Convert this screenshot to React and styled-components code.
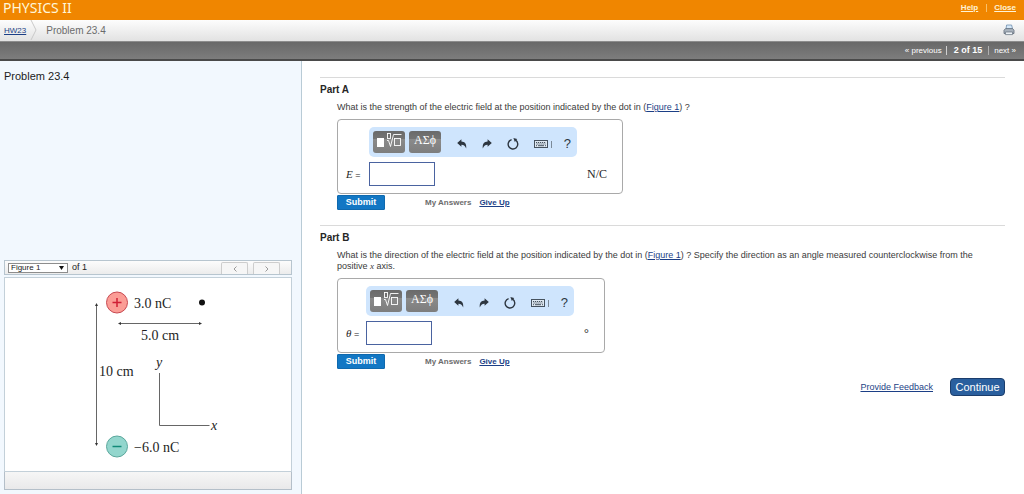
import React from "react";
import styled, { createGlobalStyle } from "styled-components";

const GlobalStyle = createGlobalStyle`
  * {
    box-sizing: border-box;
  }

  body {
    margin: 0;
    background: #ffffff;
    color: #3a3a3a;
    font-family: "Liberation Sans", Arial, sans-serif;
    font-size: 9px;
    line-height: 11px;
  }

  button,
  input,
  select {
    font-family: inherit;
    margin: 0;
  }
`;

const Page = styled.div`
  min-height: 100vh;
  display: flex;
  flex-direction: column;
`;

const TopBar = styled.header`
  height: 20px;
  padding: 0 8px 5px 3px;
  display: flex;
  align-items: center;
  justify-content: space-between;
  background: #f08600;
`;

const CourseTitle = styled.h1`
  margin: 0;
  color: #fff6d8;
  font-family: "Noto Sans", Verdana, sans-serif;
  font-size: 14px;
  font-weight: 400;
  line-height: 14px;
`;

const TopLinks = styled.nav`
  display: flex;
  align-items: center;
  font-size: 8px;
  font-weight: 700;
  line-height: 8px;
`;

const TopLink = styled.a`
  color: #fff4d6;

  & + & {
    margin-left: 8px;
    padding-left: 7px;
    border-left: 1px solid #f9c069;
  }
`;

const Breadcrumbs = styled.nav`
  height: 22px;
  padding: 0 9px 1px 4px;
  display: flex;
  align-items: center;
  background: linear-gradient(#fdfdfd, #e2e2e2);
  border-bottom: 1px solid #8c8c8c;
`;

const CrumbLink = styled.a`
  color: #1c3f86;
  font-size: 8px;
`;

const CrumbArrow = styled.svg`
  width: 8px;
  height: 20px;
  margin: 0 8px 0 4px;
`;

const CrumbCurrent = styled.span`
  flex: 1;
  color: #6b6b6b;
  font-size: 10px;
`;

const PrintButton = styled.button`
  padding: 0;
  border: 0;
  background: none;
  line-height: 0;
  cursor: pointer;
`;

const Pager = styled.nav`
  height: 19px;
  padding: 0 8px;
  display: flex;
  align-items: center;
  justify-content: flex-end;
  background: linear-gradient(#686868, #7d7d7d);
  border-bottom: 2px solid #4a4a4a;
  color: #ffffff;
`;

const PagerLink = styled.a`
  color: #ffffff;
  font-size: 8px;
  text-decoration: none;
`;

const PagerCount = styled.span`
  height: 9px;
  margin: 0 5px 0 4px;
  padding: 0 6px 0 7px;
  border-left: 1px solid #d0d0d0;
  border-right: 1px solid #b0b0b0;
  line-height: 9px;
  font-weight: 700;
`;

const Content = styled.div`
  flex: 1;
  display: flex;
`;

const Sidebar = styled.aside`
  width: 302px;
  flex-shrink: 0;
  padding: 8px 9px 4px 4px;
  display: flex;
  flex-direction: column;
  justify-content: space-between;
  background: #f2f8fe;
  border-right: 1px solid #b9cbd6;
`;

const ProblemTitle = styled.h2`
  margin: 0;
  color: #1c1c1c;
  font-size: 11px;
  font-weight: 400;
  line-height: 14px;
`;

const FigurePanel = styled.section`
  display: flex;
  flex-direction: column;
`;

const FigureBar = styled.div`
  height: 15px;
  margin-bottom: 2px;
  padding: 0 11px 0 3px;
  display: flex;
  align-items: center;
  gap: 4px;
  background: linear-gradient(#fcfcfc, #ececec);
  border: 1px solid #b7c5cf;
`;

const SelectWrap = styled.div`
  position: relative;
  display: flex;
`;

const FigureSelect = styled.select`
  width: 60px;
  height: 10px;
  padding: 0 2px;
  appearance: none;
  background: #ffffff;
  border: 1px solid #8d8d8d;
  border-radius: 0;
  color: #222222;
  font-size: 8px;
  line-height: 8px;
`;

const SelectArrow = styled.svg`
  position: absolute;
  top: 3px;
  right: 4px;
  width: 5px;
  height: 4px;
  pointer-events: none;
`;

const FigureCount = styled.span`
  flex: 1;
  color: #222222;
`;

const StepButton = styled.button`
  width: 27px;
  height: 12px;
  align-self: flex-end;
  padding: 0;
  display: flex;
  align-items: center;
  justify-content: center;
  background: #f6f6f6;
  border: 1px solid #cdcdcd;
  border-bottom: 0;
  border-radius: 2px 2px 0 0;

  & + & {
    margin-left: 1px;
  }
`;

const FigureBox = styled.div`
  background: #ffffff;
  border: 1px solid #c3d0d9;
  line-height: 0;

  svg {
    width: 100%;
    height: auto;
  }
`;

const FigureFooter = styled.div`
  height: 18px;
  background: linear-gradient(#f6f6f6, #e9e9ea);
  border: 1px solid #b4bfc9;
  border-top: 0;
`;

const Main = styled.main`
  flex: 1;
  padding: 16px 19px 16px 18px;
`;

const PartSection = styled.section`
  padding-top: 5px;
  border-top: 1px solid #dadada;

  & + & {
    margin-top: 15px;
  }
`;

const PartTitle = styled.h3`
  margin: 0 0 5px;
  color: #262626;
  font-size: 10px;
  line-height: 14px;
`;

const PartBody = styled.div`
  padding-left: 17px;
`;

const Question = styled.p`
  margin: 0 16px 6px 0;
`;

const Link = styled.a`
  color: #1c3f86;
`;

const MathSymbol = styled.i`
  font-family: "Liberation Serif", "Times New Roman", serif;
`;

const AnswerBox = styled.div`
  width: fit-content;
  padding: 7px 15px 7px 8px;
  display: grid;
  grid-template-columns: ${({ $labelWidth }) => $labelWidth}px auto auto;
  column-gap: 10px;
  row-gap: 5px;
  align-items: center;
  border: 1px solid #a9a9a9;
  border-radius: 4px;
`;

const Toolbar = styled.div`
  grid-column: 2;
  width: 208px;
  height: 30px;
  padding: 0 6px 0 4px;
  display: flex;
  align-items: center;
  justify-content: space-between;
  background: #cfe5fd;
  border-radius: 5px;
`;

const PaletteGroup = styled.div`
  display: flex;
  gap: 4px;
`;

const PaletteButton = styled.button`
  width: 32px;
  height: 22px;
  padding: 0 0 4px;
  display: flex;
  align-items: center;
  justify-content: center;
  background: linear-gradient(#6a6a6a 0, #747474 35%, #8b8b8b 36%, #7d7d7d);
  border: 0;
  border-radius: 3px;
  color: #ffffff;
  font-family: "Liberation Serif", "Times New Roman", serif;
  font-size: 12px;
  line-height: 12px;
`;

const ToolGroup = styled.div`
  padding-top: 4px;
  display: flex;
  align-items: center;
  gap: 15px;
`;

const HelpTools = styled.div`
  display: flex;
  align-items: center;
  gap: 11px;
`;

const ToolButton = styled.button`
  padding: 0;
  display: flex;
  background: none;
  border: 0;
  color: #2d3640;
  font-size: 13px;
  line-height: 14px;
`;

const AnswerLabel = styled.label`
  grid-column: 1;
  color: #262626;
  font-size: 9px;
  line-height: 14px;
  white-space: nowrap;

  i {
    font-family: "Liberation Serif", "Times New Roman", serif;
    font-size: 11px;
  }
`;

const AnswerInput = styled.input`
  width: 66px;
  height: 24px;
  padding: 0 4px;
  background: #ffffff;
  border: 1px solid #4a63a0;
  font-size: 11px;
`;

const Unit = styled.span`
  color: #262626;
  font-family: "Liberation Serif", "Times New Roman", serif;
  font-size: 12px;
  line-height: 14px;
`;

const Actions = styled.div`
  margin-top: 1px;
  display: flex;
  align-items: center;
  font-size: 8px;
  font-weight: 700;
`;

const SubmitButton = styled.button`
  width: 48px;
  height: 15px;
  margin-right: 40px;
  padding: 0;
  background: #1277c4;
  border: 1px solid #0f69ae;
  border-radius: 1px;
  color: #ffffff;
  font-size: 9px;
  font-weight: 700;
  line-height: 13px;
`;

const MyAnswers = styled.span`
  margin-right: 8px;
  color: #6c6c6c;
`;

const PageActions = styled.div`
  margin-top: 9px;
  display: flex;
  align-items: center;
  justify-content: flex-end;
  gap: 17px;
`;

const ContinueButton = styled.button`
  width: 55px;
  height: 18px;
  padding: 0;
  background: #2a5f9e;
  border: 1px solid #1b3d6c;
  border-radius: 4px;
  color: #ffffff;
  font-size: 11px;
  line-height: 14px;
`;

const PrinterIcon = () => (
  <svg width="12" height="12" viewBox="0 0 12 12">
    <path d="M3 5 3.6 1h5L9.6 5z" fill="#d6e8f8" stroke="#6f8fae" strokeWidth="0.8" />
    <path d="M1 6.2 2.6 4.6h7L11 6.2v3.3H1z" fill="#a9b3bd" stroke="#5f6b78" strokeWidth="0.8" />
    <path d="M2.4 8h7.2v2.6H2.4z" fill="#eef3f7" stroke="#5f6b78" strokeWidth="0.7" />
  </svg>
);

const TemplateIcon = () => (
  <svg width="28" height="18" viewBox="0 0 28 18" fill="none" stroke="#ffffff">
    <rect x="2" y="7" width="7" height="9" fill="#ffffff" stroke="none" />
    <rect x="12.5" y="2.5" width="3" height="5" strokeWidth="0.9" />
    <path d="M12 9.5h1.5l2 6 3-12h8" strokeWidth="0.9" />
    <rect x="19.5" y="7.5" width="6" height="7" strokeWidth="0.9" />
  </svg>
);

const UndoIcon = () => (
  <svg width="10" height="10" viewBox="0 0 10 10" fill="currentColor">
    <path d="M0.2 4 4.4 0.3V2.5C7.8 2.7 9.8 4.8 9.2 9.6 8.3 7 7 5.8 4.4 5.7V7.8z" />
  </svg>
);

const RedoIcon = () => (
  <svg width="10" height="10" viewBox="0 0 10 10" fill="currentColor">
    <path d="M9.8 4 5.6 0.3V2.5C2.2 2.7 0.2 4.8 0.8 9.6 1.7 7 3 5.8 5.6 5.7V7.8z" />
  </svg>
);

const ResetIcon = () => (
  <svg width="12" height="12" viewBox="0 0 12 12">
    <path d="M4.6 1.6A4.8 4.8 0 1 0 8.6 2.2" fill="none" stroke="currentColor" strokeWidth="1.4" />
    <path d="M6.4 0 10.2 1 7.8 4z" fill="currentColor" />
  </svg>
);

const KeyboardIcon = () => (
  <svg width="19" height="8" viewBox="0 0 19 8" fill="none" stroke="#46525e">
    <rect x="0.5" y="0.5" width="13" height="7" fill="#dfe9f2" />
    <path d="M2 2.5h10M2.5 4h9" strokeDasharray="1.2 0.8" />
    <path d="M2 5.7h1M4 5.7h6M11 5.7h1" />
    <path d="M17.5 1v7" stroke="#7b8a99" />
  </svg>
);

const ChargeFigure = () => (
  <svg
    viewBox="0 0 286 193"
    role="img"
    aria-label="Two charges separated by 10 cm"
    fontFamily="'Liberation Serif', 'Times New Roman', serif"
    fontSize="14"
    fill="#1e1e1e"
  >
    <g fill="none" stroke="#666666">
      <path d="M91.5 26v140" />
      <path d="M114 45.5h82" />
      <path d="M154.5 95v52.5h50" />
    </g>
    <g fill="#333333">
      <path d="M91.5 25l1.5 3h-3z" />
      <path d="M91.5 168l1.5-3h-3z" />
      <path d="M113 45.5l3-1.5v3z" />
      <path d="M197 45.5l-3-1.5v3z" />
    </g>
    <circle cx="112" cy="24.5" r="10.5" fill="#fb9d96" stroke="#c84850" />
    <path d="M107.5 24.5h9M112 20v9" stroke="#d01f35" strokeWidth="1.5" />
    <circle cx="112" cy="168.5" r="10.5" fill="#93d6cd" stroke="#5aa79c" />
    <path d="M107.5 168.5h9" stroke="#128a78" strokeWidth="1.5" />
    <circle cx="197" cy="24.5" r="3" fill="#111111" />
    <text x="129" y="30">3.0 nC</text>
    <text x="136" y="62">5.0 cm</text>
    <text x="94" y="98">10 cm</text>
    <text x="151" y="89" fontStyle="italic">y</text>
    <text x="206" y="152" fontStyle="italic">x</text>
    <text x="129" y="174">−6.0 nC</text>
  </svg>
);

const Part = ({ id, title, question, symbol, unit, labelWidth }) => (
  <PartSection>
    <PartTitle>{title}</PartTitle>
    <PartBody>
      <Question>{question}</Question>
      <AnswerBox $labelWidth={labelWidth}>
        <Toolbar>
          <PaletteGroup>
            <PaletteButton type="button" aria-label="Templates">
              <TemplateIcon />
            </PaletteButton>
            <PaletteButton type="button">ΑΣϕ</PaletteButton>
          </PaletteGroup>
          <ToolGroup>
            <ToolButton type="button" aria-label="Undo"><UndoIcon /></ToolButton>
            <ToolButton type="button" aria-label="Redo"><RedoIcon /></ToolButton>
            <ToolButton type="button" aria-label="Reset"><ResetIcon /></ToolButton>
            <HelpTools>
              <ToolButton type="button" aria-label="Keyboard shortcuts"><KeyboardIcon /></ToolButton>
              <ToolButton type="button">?</ToolButton>
            </HelpTools>
          </ToolGroup>
        </Toolbar>
        <AnswerLabel htmlFor={id}><i>{symbol}</i> =</AnswerLabel>
        <AnswerInput id={id} type="text" />
        <Unit>{unit}</Unit>
      </AnswerBox>
      <Actions>
        <SubmitButton type="submit">Submit</SubmitButton>
        <MyAnswers>My Answers</MyAnswers>
        <Link href="#give-up">Give Up</Link>
      </Actions>
    </PartBody>
  </PartSection>
);

const App = () => (
  <Page>
    <GlobalStyle />
    <TopBar>
      <CourseTitle>PHYSICS II</CourseTitle>
      <TopLinks>
        <TopLink href="#help">Help</TopLink>
        <TopLink href="#close">Close</TopLink>
      </TopLinks>
    </TopBar>
    <Breadcrumbs>
      <CrumbLink href="#hw23">HW23</CrumbLink>
      <CrumbArrow viewBox="0 0 8 20" fill="none" stroke="#c9c9c9">
        <path d="M1 0l5 10-5 10" />
      </CrumbArrow>
      <CrumbCurrent>Problem 23.4</CrumbCurrent>
      <PrintButton type="button" aria-label="Print"><PrinterIcon /></PrintButton>
    </Breadcrumbs>
    <Pager>
      <PagerLink href="#previous">« previous</PagerLink>
      <PagerCount>2 of 15</PagerCount>
      <PagerLink href="#next">next »</PagerLink>
    </Pager>

    <Content>
      <Sidebar>
        <ProblemTitle>Problem 23.4</ProblemTitle>
        <FigurePanel>
          <FigureBar>
            <SelectWrap>
              <FigureSelect aria-label="Figure">
                <option>Figure 1</option>
              </FigureSelect>
              <SelectArrow viewBox="0 0 5 4">
                <path d="M0 0h5l-2.5 4z" fill="#111111" />
              </SelectArrow>
            </SelectWrap>
            <FigureCount>of 1</FigureCount>
            <StepButton type="button" aria-label="Previous figure">
              <svg width="4" height="6" viewBox="0 0 4 6" fill="none" stroke="#9a9a9a">
                <path d="M3.5 0.5 1 3l2.5 2.5" />
              </svg>
            </StepButton>
            <StepButton type="button" aria-label="Next figure">
              <svg width="4" height="6" viewBox="0 0 4 6" fill="none" stroke="#9a9a9a">
                <path d="M0.5 0.5 3 3 0.5 5.5" />
              </svg>
            </StepButton>
          </FigureBar>
          <FigureBox>
            <ChargeFigure />
          </FigureBox>
          <FigureFooter />
        </FigurePanel>
      </Sidebar>

      <Main>
        <Part
          id="answer-a"
          title="Part A"
          question={
            <>
              What is the strength of the electric field at the position indicated by the dot in (
              <Link href="#figure-1">Figure 1</Link>) ?
            </>
          }
          symbol="E"
          unit="N/C"
          labelWidth={13}
        />
        <Part
          id="answer-b"
          title="Part B"
          question={
            <>
              What is the direction of the electric field at the position indicated by the dot in (
              <Link href="#figure-1">Figure 1</Link>) ? Specify the direction as an angle measured
              counterclockwise from the positive <MathSymbol>x</MathSymbol> axis.
            </>
          }
          symbol="θ"
          unit="°"
          labelWidth={10}
        />
        <PageActions>
          <Link href="#feedback">Provide Feedback</Link>
          <ContinueButton type="button">Continue</ContinueButton>
        </PageActions>
      </Main>
    </Content>
  </Page>
);

export default App;
